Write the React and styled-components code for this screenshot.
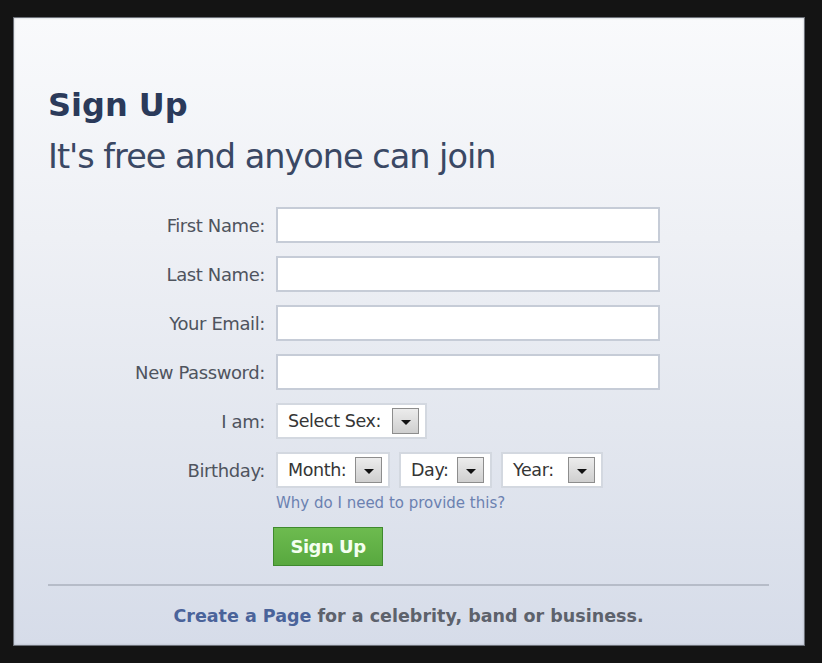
import React from 'react';
import styled, { createGlobalStyle } from 'styled-components';

const GlobalStyle = createGlobalStyle`
  html, body {
    margin: 0;
    padding: 0;
    background: #141414;
  }
  * {
    box-sizing: border-box;
  }
`;

const Screen = styled.div`
  width: 822px;
  height: 663px;
  padding: 18px 18px 18px 14px;
  background: #141414;
`;

const Panel = styled.div`
  width: 790px;
  height: 627px;
  padding: 71px 35px 0 34px;
  display: flex;
  flex-direction: column;
  background: linear-gradient(180deg, #f9fafc 0%, #eef0f5 35%, #e3e7ef 65%, #d6dce9 100%);
  box-shadow: 0 0 0 1px #6c7078, inset 0 0 2px rgba(120, 128, 140, 0.5);
  font-family: "DejaVu Sans", Verdana, sans-serif;
`;

const Heading = styled.h1`
  margin: 0;
  font-size: 32px;
  line-height: 32px;
  font-weight: bold;
  color: #2b3a5a;
`;

const Subtitle = styled.h2`
  margin: 16px 0 0;
  font-size: 33.5px;
  line-height: 40px;
  font-weight: normal;
  letter-spacing: -1px;
  color: #3a4864;
`;

const Form = styled.div`
  margin-top: 30px;
  display: grid;
  grid-template-columns: 217px auto;
  column-gap: 11px;
  row-gap: 13px;
  align-items: center;
  justify-content: start;
`;

const Label = styled.label`
  text-align: right;
  font-size: 18px;
  letter-spacing: -0.4px;
  color: #4f545e;
`;

const TextInput = styled.input`
  width: 384px;
  height: 36px;
  margin: 0;
  border: 2px solid #c6ccd7;
  background: #fff;
  outline: none;
`;

const Dropdowns = styled.div`
  display: flex;
  gap: 9px;
`;

const SelectBox = styled.div`
  width: ${(p) => p.w}px;
  height: 36px;
  display: flex;
  align-items: center;
  justify-content: space-between;
  padding: 0 6px 0 10px;
  border: 2px solid #d3d8e0;
  background: #fff;
  font-size: 17.5px;
  letter-spacing: -0.4px;
  color: #353535;
`;

const ArrowButton = styled.span`
  width: 27px;
  height: 26px;
  display: flex;
  align-items: center;
  justify-content: center;
  border: 1px solid #8d8d8d;
  background: linear-gradient(180deg, #ececec 0%, #cfcfcf 100%);

  &::after {
    content: '';
    border-left: 5px solid transparent;
    border-right: 5px solid transparent;
    border-top: 5px solid #111;
    margin-top: 3px;
  }
`;

const Extra = styled.div`
  grid-column: 2;
  display: flex;
  flex-direction: column;
  align-items: flex-start;
  margin-top: -7px;
`;

const HelpLink = styled.a`
  font-size: 15px;
  line-height: 18px;
  color: #6b81b1;
  text-decoration: none;
`;

const SubmitButton = styled.button`
  margin: 15px 0 0 -3px;
  width: 110px;
  height: 39px;
  padding: 0;
  border: 1px solid #3f8a2e;
  background: linear-gradient(180deg, #6dbb4f 0%, #58a83f 100%);
  color: #f4fff0;
  font-family: "DejaVu Sans", Verdana, sans-serif;
  font-size: 18px;
  font-weight: bold;
  letter-spacing: -0.5px;
`;

const Divider = styled.hr`
  margin: 18px 0 0;
  border: none;
  height: 2px;
  background: #b6bcc8;
`;

const Footer = styled.p`
  margin: 20px 0 0;
  text-align: center;
  font-size: 17.5px;
  font-weight: bold;
  color: #5d626c;
`;

const FooterLink = styled.a`
  color: #4a639a;
  text-decoration: none;
`;

const fields = ['First Name:', 'Last Name:', 'Your Email:', 'New Password:'];

const App = () => {
  return (
    <Screen>
      <GlobalStyle />
      <Panel>
        <Heading>Sign Up</Heading>
        <Subtitle>It's free and anyone can join</Subtitle>

        <Form>
          {fields.map((f) => (
            <React.Fragment key={f}>
              <Label>{f}</Label>
              <TextInput type="text" />
            </React.Fragment>
          ))}

          <Label>I am:</Label>
          <Dropdowns>
            <SelectBox w={151}>Select Sex:<ArrowButton /></SelectBox>
          </Dropdowns>

          <Label>Birthday:</Label>
          <Dropdowns>
            <SelectBox w={114}>Month:<ArrowButton /></SelectBox>
            <SelectBox w={93}>Day:<ArrowButton /></SelectBox>
            <SelectBox w={102}>Year:<ArrowButton /></SelectBox>
          </Dropdowns>

          <Extra>
            <HelpLink href="#">Why do I need to provide this?</HelpLink>
            <SubmitButton>Sign Up</SubmitButton>
          </Extra>
        </Form>

        <Divider />
        <Footer>
          <FooterLink href="#">Create a Page</FooterLink> for a celebrity, band or business.
        </Footer>
      </Panel>
    </Screen>
  );
};

export default App;
